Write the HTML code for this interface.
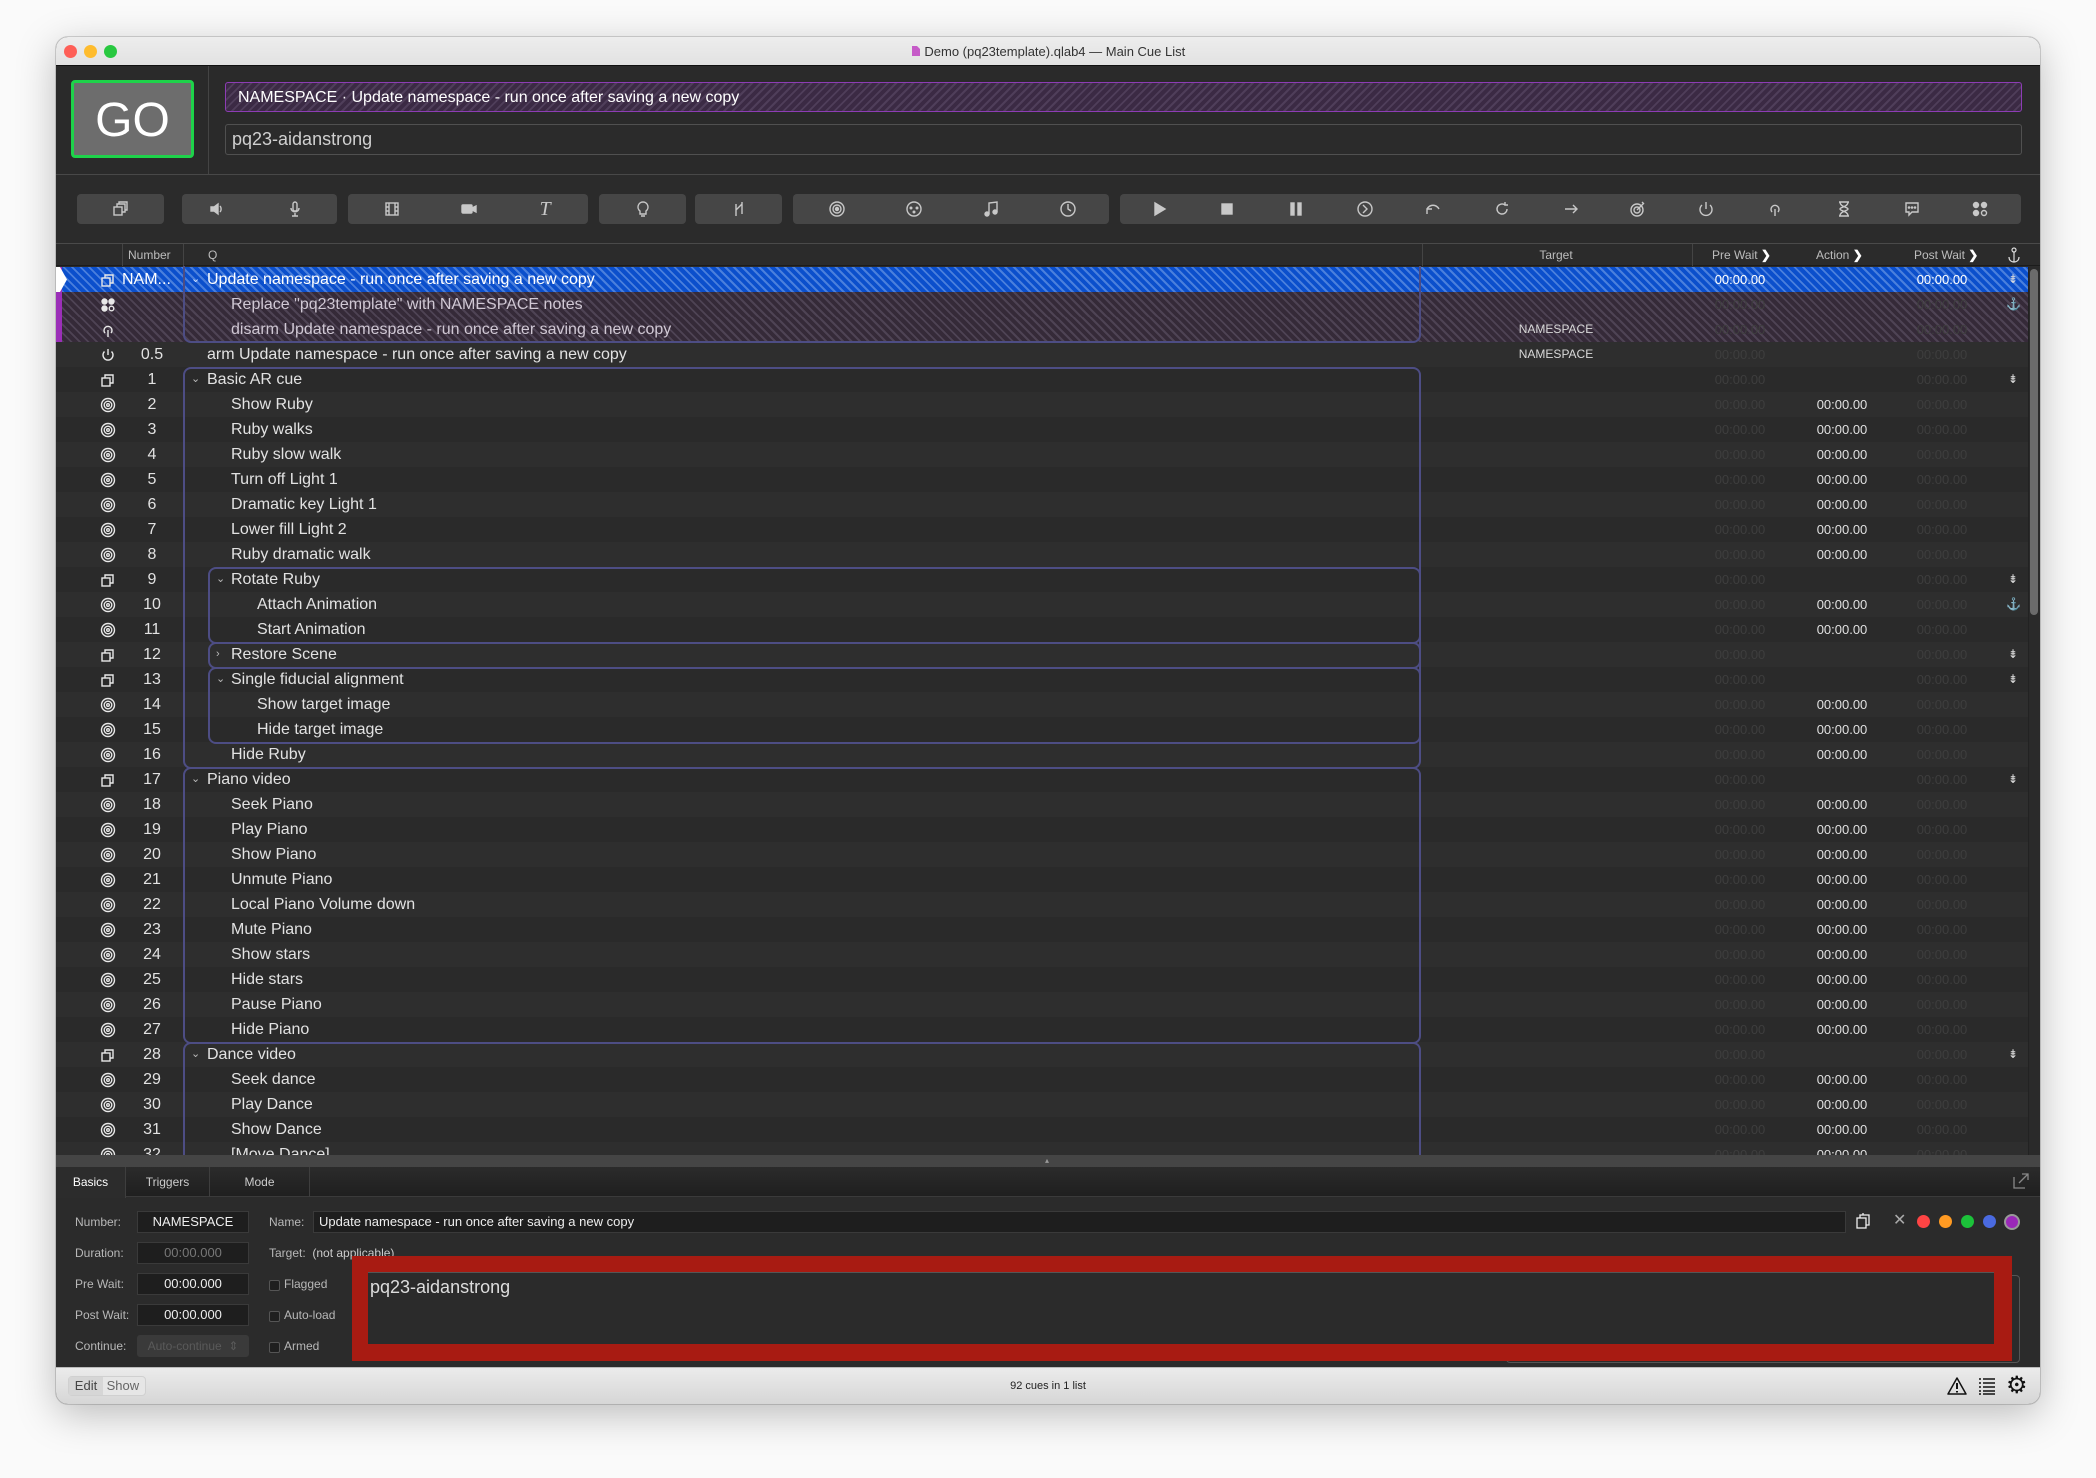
<!DOCTYPE html>
<html><head><meta charset="utf-8">
<style>
*{box-sizing:border-box;margin:0;padding:0}
body{width:2096px;height:1478px;background:#fafafa;font-family:"Liberation Sans",sans-serif;position:relative;overflow:hidden}
.a{position:absolute}
#win{position:absolute;left:56px;top:37px;width:1984px;height:1367px;border-radius:12px;overflow:hidden;background:#2b2b2b;box-shadow:0 10px 40px rgba(0,0,0,.25),0 0 0 1px rgba(0,0,0,.15)}
.tl{position:absolute;top:8px;width:13px;height:13px;border-radius:50%}
.btn{position:absolute;top:157px;height:30px;background:#464646;border-radius:4px}
.ti{position:absolute;top:157px;height:30px;width:30px;margin-left:-15px;display:flex;align-items:center;justify-content:center;color:#c8c8c8}
.ti svg{width:18px;height:18px;stroke:#c8c8c8;fill:none;stroke-width:1.4}
#tbl{position:absolute;left:0;top:230px;width:1984px}
.r{height:25px;position:relative;background:#2a2a2a;color:#e2e2e2;font-size:16px;line-height:25px}
.r:nth-child(even){background:#2e2e2e}
.r span{position:absolute;top:0;white-space:nowrap}
.ic{left:42px;width:20px;height:25px;display:flex;align-items:center;justify-content:center}
.ic svg{width:16px;height:16px;stroke:#e8e8e8;fill:none;stroke-width:1.4}
.n{left:64px;width:64px;text-align:center}
.l0{left:151px}.l1{left:175px}.l2{left:201px}
.c0{left:135px;font-size:11px;color:#bbb}.c1{left:160px;font-size:11px;color:#bbb}
.tg{left:1440px;width:120px;text-align:center;font-size:12px;color:#d8d8d8}
.pw,.ac,.po{width:100px;text-align:center;font-size:13px;color:#3e3e3e}
.pw{left:1634px}.ac{left:1736px;color:#e0e0e0}.po{left:1836px}
.ri{left:1950px;width:14px;font-size:12px;color:#ddd;text-align:center}
.box{position:absolute;border:2px solid #4d4d84;border-radius:8px;pointer-events:none}
.lab{position:absolute;font-size:12px;color:#b8b8b8}
.fld{position:absolute;height:22px;background:#1e1e1e;border:1px solid #3a3a3a;color:#eee;font-size:13px;line-height:20px;text-align:center}
.cb{position:absolute;width:11px;height:11px;border:1px solid #555;border-radius:2px;background:#1f1f1f}
</style></head><body>
<div id="win">
<div class="a" style="left:0;top:0;width:1984px;height:29px;background:linear-gradient(#ededed,#e2e2e2);border-bottom:1px solid #111"></div>
<div class="tl" style="left:8px;background:#fe5f57"></div>
<div class="tl" style="left:28px;background:#febc2e"></div>
<div class="tl" style="left:48px;background:#28c840"></div>
<div class="a" style="left:0;width:1984px;top:7px;text-align:center;font-size:13px;color:#333"><svg width="10" height="12" style="vertical-align:-1px"><path d="M1 1h5l3 3v7H1z" fill="#c65bc8"/></svg> Demo (pq23template).qlab4 — Main Cue List</div>

<div class="a" style="left:0;top:29px;width:1984px;height:108px;background:#2a2a2a"></div>
<div class="a" style="left:15px;top:43px;width:123px;height:78px;background:#6d6d6d;border:3px solid #1ed24a;border-radius:4px;color:#fff;font-size:48px;line-height:76px;text-align:center">GO</div>
<div class="a" style="left:152px;top:29px;width:1px;height:108px;background:#444"></div>
<div class="a" style="left:169px;top:45px;width:1797px;height:30px;border:1px solid #8d3cb5;border-radius:3px;background:repeating-linear-gradient(-45deg,#3b2a44 0 4px,#4f3e5a 4px 6px);color:#fff;font-size:16px;line-height:30px;padding-left:12px">NAMESPACE · Update namespace - run once after saving a new copy</div>
<div class="a" style="left:169px;top:87px;width:1797px;height:31px;border:1px solid #505050;border-radius:3px;background:#2b2b2b;color:#d0d0d0;font-size:18px;line-height:29px;padding-left:6px">pq23-aidanstrong</div>
<div class="a" style="left:0;top:137px;width:1984px;height:1px;background:#484848"></div>

<div class="btn" style="left:21px;width:87px"></div>
<div class="btn" style="left:126px;width:155px"></div>
<div class="btn" style="left:292px;width:240px"></div>
<div class="btn" style="left:543px;width:87px"></div>
<div class="btn" style="left:639px;width:87px"></div>
<div class="btn" style="left:737px;width:316px"></div>
<div class="btn" style="left:1064px;width:901px"></div>
<div class="ti" style="left:64px"><svg viewBox="0 0 18 18"><rect x="3" y="7" width="8" height="8"/><path d="M6 7V4h8v8h-3M8 4V2h8v8h-2"/></svg></div>
<div class="ti" style="left:161px"><svg viewBox="0 0 18 18"><path d="M3 7h3l4-3v10l-4-3H3z" fill="#c8c8c8"/><path d="M12 6c1.5 1.5 1.5 4.5 0 6"/></svg></div>
<div class="ti" style="left:239px"><svg viewBox="0 0 18 18"><rect x="7" y="2" width="4" height="9" rx="2"/><path d="M5 8c0 5 8 5 8 0M9 13v3M6 16h6"/></svg></div>
<div class="ti" style="left:336px"><svg viewBox="0 0 18 18"><rect x="3" y="3" width="12" height="12"/><path d="M6 3v12M12 3v12M3 7h3M3 11h3M12 7h3M12 11h3"/></svg></div>
<div class="ti" style="left:413px"><svg viewBox="0 0 18 18"><rect x="2" y="5" width="10" height="8" rx="1" fill="#c8c8c8"/><path d="M12 8l4-2v6l-4-2z" fill="#c8c8c8"/></svg></div>
<div class="ti" style="left:489px;font-family:'Liberation Serif',serif;font-style:italic;font-size:20px">T</div>
<div class="ti" style="left:587px"><svg viewBox="0 0 18 18"><path d="M9 2a5 5 0 0 0-3 9v3h6v-3a5 5 0 0 0-3-9zM7 16h4"/></svg></div>
<div class="ti" style="left:683px"><svg viewBox="0 0 18 18"><path d="M6 16V4M12 14V2M6 10l6-6"/></svg></div>
<div class="ti" style="left:781px"><svg viewBox="0 0 18 18"><circle cx="9" cy="9" r="7"/><circle cx="9" cy="9" r="4"/><circle cx="9" cy="9" r="1.5" fill="#c8c8c8"/></svg></div>
<div class="ti" style="left:858px"><svg viewBox="0 0 18 18"><circle cx="9" cy="9" r="7"/><circle cx="6" cy="8" r=".8"/><circle cx="12" cy="8" r=".8"/><circle cx="9" cy="12" r=".8"/></svg></div>
<div class="ti" style="left:935px"><svg viewBox="0 0 18 18"><path d="M7 14V3l8-1v10"/><circle cx="5" cy="14" r="2" fill="#c8c8c8"/><circle cx="13" cy="12" r="2" fill="#c8c8c8"/></svg></div>
<div class="ti" style="left:1012px"><svg viewBox="0 0 18 18"><circle cx="9" cy="9" r="7"/><path d="M9 4v5l3 2"/></svg></div>
<div class="ti" style="left:1103px"><svg viewBox="0 0 18 18"><path d="M5 3l10 6-10 6z" fill="#c8c8c8"/></svg></div>
<div class="ti" style="left:1171px"><svg viewBox="0 0 18 18"><rect x="4" y="4" width="10" height="10" fill="#c8c8c8"/></svg></div>
<div class="ti" style="left:1240px"><svg viewBox="0 0 18 18"><rect x="4" y="3" width="3" height="12" fill="#c8c8c8"/><rect x="11" y="3" width="3" height="12" fill="#c8c8c8"/></svg></div>
<div class="ti" style="left:1309px"><svg viewBox="0 0 18 18"><circle cx="9" cy="9" r="7"/><path d="M7 5l4 4-4 4"/></svg></div>
<div class="ti" style="left:1377px"><svg viewBox="0 0 18 18"><path d="M3 14V9h5M3 9c3-5 9-5 12 0"/></svg></div>
<div class="ti" style="left:1446px"><svg viewBox="0 0 18 18"><path d="M14 9a5 5 0 1 1-2-4M12 2v3h3"/></svg></div>
<div class="ti" style="left:1515px"><svg viewBox="0 0 18 18"><path d="M3 9h12M11 5l4 4-4 4"/></svg></div>
<div class="ti" style="left:1582px"><svg viewBox="0 0 18 18"><circle cx="8" cy="10" r="6"/><circle cx="8" cy="10" r="3"/><path d="M8 10l7-7M13 2l2 2"/></svg></div>
<div class="ti" style="left:1650px"><svg viewBox="0 0 18 18"><path d="M9 2v7M5 5a6 6 0 1 0 8 0"/></svg></div>
<div class="ti" style="left:1719px"><svg viewBox="0 0 18 18"><path d="M9 16V9M6 12a4 4 0 1 1 6 0"/></svg></div>
<div class="ti" style="left:1788px"><svg viewBox="0 0 18 18"><path d="M4 2h10M4 16h10M5 2c0 5 8 5 8 7s-8 2-8 7M13 2c0 5-8 5-8 7s8 2 8 7"/></svg></div>
<div class="ti" style="left:1856px"><svg viewBox="0 0 18 18"><path d="M3 3h12v9H9l-3 3v-3H3z"/><circle cx="6" cy="7.5" r=".6"/><circle cx="9" cy="7.5" r=".6"/><circle cx="12" cy="7.5" r=".6"/></svg></div>
<div class="ti" style="left:1924px"><svg viewBox="0 0 18 18"><circle cx="5" cy="5" r="2.5" fill="#c8c8c8"/><circle cx="13" cy="5" r="2.5" fill="#c8c8c8"/><circle cx="5" cy="13" r="2.5" fill="#c8c8c8"/><circle cx="13" cy="13" r="2.5"/></svg></div>

<div class="a" style="left:0;top:206px;width:1984px;height:1px;background:#4a4a4a"></div>
<div class="a" style="left:0;top:207px;width:1984px;height:22px;background:#2b2b2b;border-bottom:1px solid #1c1c1c;font-size:12px;color:#bdbdbd;line-height:22px">
<div class="a" style="left:66px;top:0;width:1px;height:22px;background:#444"></div>
<div class="a" style="left:127px;top:0;width:1px;height:22px;background:#444"></div>
<div class="a" style="left:1366px;top:0;width:1px;height:22px;background:#444"></div>
<div class="a" style="left:1636px;top:0;width:1px;height:22px;background:#444"></div>
<span class="a" style="left:72px">Number</span>
<span class="a" style="left:152px">Q</span>
<span class="a" style="left:1440px;width:120px;text-align:center">Target</span>
<span class="a" style="left:1656px">Pre Wait <b style="color:#fff">❯</b></span>
<span class="a" style="left:1760px">Action <b style="color:#fff">❯</b></span>
<span class="a" style="left:1858px">Post Wait <b style="color:#fff">❯</b></span>
<svg class="a" style="left:1951px;top:3px" width="14" height="16"><circle cx="7" cy="3" r="2" stroke="#ddd" fill="none" stroke-width="1.2"/><path d="M7 5v10M2 10c0 3 2 5 5 5s5-2 5-5" stroke="#ddd" fill="none" stroke-width="1.2"/></svg>
</div>

<div id="tbl">
<div class="r" style="background:repeating-linear-gradient(45deg,#0b4fcc 0 4px,#4a7fdc 4px 6px);color:#fff"><span class="ic"><svg viewBox="0 0 16 16"><rect x="2" y="6" width="8" height="8"/><path d="M5 6V3h8v8h-3"/></svg></span><span class="n" style="text-align:left;left:66px">NAM...</span><span class="c0" style="color:#cfe0ff">⌄</span><span class="l0">Update namespace - run once after saving a new copy</span><span class="pw" style="color:#fff">00:00.00</span><span class="po" style="color:#fff">00:00.00</span><span class="ri">⇟</span></div>
<div class="r" style="background:repeating-linear-gradient(45deg,#352a38 0 4px,#4e4354 4px 6px);color:#d0c8d4"><span class="ic"><svg viewBox="0 0 16 16"><circle cx="4.5" cy="4.5" r="2.5" fill="#e8e8e8"/><circle cx="11.5" cy="4.5" r="2.5" fill="#e8e8e8"/><circle cx="4.5" cy="11.5" r="2.5" fill="#e8e8e8"/><circle cx="11.5" cy="11.5" r="2.3"/></svg></span><span class="l1">Replace "pq23template" with NAMESPACE notes</span><span class="pw">00:00.00</span><span class="po">00:00.00</span><span class="ri">⚓</span></div>
<div class="r" style="background:repeating-linear-gradient(45deg,#352a38 0 4px,#4e4354 4px 6px);color:#d0c8d4"><span class="ic"><svg viewBox="0 0 16 16"><path d="M8 15V8M5 11a4 4 0 1 1 6 0"/></svg></span><span class="l1">disarm Update namespace - run once after saving a new copy</span><span class="tg">NAMESPACE</span><span class="pw">00:00.00</span><span class="po">00:00.00</span></div>
<div class="r"><span class="ic"><svg viewBox="0 0 16 16"><path d="M8 2v6M4.5 4.5a5 5 0 1 0 7 0"/></svg></span><span class="n">0.5</span><span class="l0">arm Update namespace - run once after saving a new copy</span><span class="tg">NAMESPACE</span><span class="pw">00:00.00</span><span class="po">00:00.00</span></div>
<div class="r"><span class="ic"><svg viewBox="0 0 16 16"><rect x="2" y="6" width="8" height="8"/><path d="M5 6V3h8v8h-3"/></svg></span><span class="n">1</span><span class="c0">⌄</span><span class="l0">Basic AR cue</span><span class="pw">00:00.00</span><span class="po">00:00.00</span><span class="ri">⇟</span></div>
<div class="r"><span class="ic"><svg viewBox="0 0 16 16"><circle cx="8" cy="8" r="6.5"/><circle cx="8" cy="8" r="3.8"/><circle cx="8" cy="8" r="1.3"/></svg></span><span class="n">2</span><span class="l1">Show Ruby</span><span class="pw">00:00.00</span><span class="ac">00:00.00</span><span class="po">00:00.00</span></div>
<div class="r"><span class="ic"><svg viewBox="0 0 16 16"><circle cx="8" cy="8" r="6.5"/><circle cx="8" cy="8" r="3.8"/><circle cx="8" cy="8" r="1.3"/></svg></span><span class="n">3</span><span class="l1">Ruby walks</span><span class="pw">00:00.00</span><span class="ac">00:00.00</span><span class="po">00:00.00</span></div>
<div class="r"><span class="ic"><svg viewBox="0 0 16 16"><circle cx="8" cy="8" r="6.5"/><circle cx="8" cy="8" r="3.8"/><circle cx="8" cy="8" r="1.3"/></svg></span><span class="n">4</span><span class="l1">Ruby slow walk</span><span class="pw">00:00.00</span><span class="ac">00:00.00</span><span class="po">00:00.00</span></div>
<div class="r"><span class="ic"><svg viewBox="0 0 16 16"><circle cx="8" cy="8" r="6.5"/><circle cx="8" cy="8" r="3.8"/><circle cx="8" cy="8" r="1.3"/></svg></span><span class="n">5</span><span class="l1">Turn off Light 1</span><span class="pw">00:00.00</span><span class="ac">00:00.00</span><span class="po">00:00.00</span></div>
<div class="r"><span class="ic"><svg viewBox="0 0 16 16"><circle cx="8" cy="8" r="6.5"/><circle cx="8" cy="8" r="3.8"/><circle cx="8" cy="8" r="1.3"/></svg></span><span class="n">6</span><span class="l1">Dramatic key Light 1</span><span class="pw">00:00.00</span><span class="ac">00:00.00</span><span class="po">00:00.00</span></div>
<div class="r"><span class="ic"><svg viewBox="0 0 16 16"><circle cx="8" cy="8" r="6.5"/><circle cx="8" cy="8" r="3.8"/><circle cx="8" cy="8" r="1.3"/></svg></span><span class="n">7</span><span class="l1">Lower fill Light 2</span><span class="pw">00:00.00</span><span class="ac">00:00.00</span><span class="po">00:00.00</span></div>
<div class="r"><span class="ic"><svg viewBox="0 0 16 16"><circle cx="8" cy="8" r="6.5"/><circle cx="8" cy="8" r="3.8"/><circle cx="8" cy="8" r="1.3"/></svg></span><span class="n">8</span><span class="l1">Ruby dramatic walk</span><span class="pw">00:00.00</span><span class="ac">00:00.00</span><span class="po">00:00.00</span></div>
<div class="r"><span class="ic"><svg viewBox="0 0 16 16"><rect x="2" y="6" width="8" height="8"/><path d="M5 6V3h8v8h-3"/></svg></span><span class="n">9</span><span class="c1">⌄</span><span class="l1">Rotate Ruby</span><span class="pw">00:00.00</span><span class="po">00:00.00</span><span class="ri">⇟</span></div>
<div class="r"><span class="ic"><svg viewBox="0 0 16 16"><circle cx="8" cy="8" r="6.5"/><circle cx="8" cy="8" r="3.8"/><circle cx="8" cy="8" r="1.3"/></svg></span><span class="n">10</span><span class="l2">Attach Animation</span><span class="pw">00:00.00</span><span class="ac">00:00.00</span><span class="po">00:00.00</span><span class="ri">⚓</span></div>
<div class="r"><span class="ic"><svg viewBox="0 0 16 16"><circle cx="8" cy="8" r="6.5"/><circle cx="8" cy="8" r="3.8"/><circle cx="8" cy="8" r="1.3"/></svg></span><span class="n">11</span><span class="l2">Start Animation</span><span class="pw">00:00.00</span><span class="ac">00:00.00</span><span class="po">00:00.00</span></div>
<div class="r"><span class="ic"><svg viewBox="0 0 16 16"><rect x="2" y="6" width="8" height="8"/><path d="M5 6V3h8v8h-3"/></svg></span><span class="n">12</span><span class="c1">›</span><span class="l1">Restore Scene</span><span class="pw">00:00.00</span><span class="po">00:00.00</span><span class="ri">⇟</span></div>
<div class="r"><span class="ic"><svg viewBox="0 0 16 16"><rect x="2" y="6" width="8" height="8"/><path d="M5 6V3h8v8h-3"/></svg></span><span class="n">13</span><span class="c1">⌄</span><span class="l1">Single fiducial alignment</span><span class="pw">00:00.00</span><span class="po">00:00.00</span><span class="ri">⇟</span></div>
<div class="r"><span class="ic"><svg viewBox="0 0 16 16"><circle cx="8" cy="8" r="6.5"/><circle cx="8" cy="8" r="3.8"/><circle cx="8" cy="8" r="1.3"/></svg></span><span class="n">14</span><span class="l2">Show target image</span><span class="pw">00:00.00</span><span class="ac">00:00.00</span><span class="po">00:00.00</span></div>
<div class="r"><span class="ic"><svg viewBox="0 0 16 16"><circle cx="8" cy="8" r="6.5"/><circle cx="8" cy="8" r="3.8"/><circle cx="8" cy="8" r="1.3"/></svg></span><span class="n">15</span><span class="l2">Hide target image</span><span class="pw">00:00.00</span><span class="ac">00:00.00</span><span class="po">00:00.00</span></div>
<div class="r"><span class="ic"><svg viewBox="0 0 16 16"><circle cx="8" cy="8" r="6.5"/><circle cx="8" cy="8" r="3.8"/><circle cx="8" cy="8" r="1.3"/></svg></span><span class="n">16</span><span class="l1">Hide Ruby</span><span class="pw">00:00.00</span><span class="ac">00:00.00</span><span class="po">00:00.00</span></div>
<div class="r"><span class="ic"><svg viewBox="0 0 16 16"><rect x="2" y="6" width="8" height="8"/><path d="M5 6V3h8v8h-3"/></svg></span><span class="n">17</span><span class="c0">⌄</span><span class="l0">Piano video</span><span class="pw">00:00.00</span><span class="po">00:00.00</span><span class="ri">⇟</span></div>
<div class="r"><span class="ic"><svg viewBox="0 0 16 16"><circle cx="8" cy="8" r="6.5"/><circle cx="8" cy="8" r="3.8"/><circle cx="8" cy="8" r="1.3"/></svg></span><span class="n">18</span><span class="l1">Seek Piano</span><span class="pw">00:00.00</span><span class="ac">00:00.00</span><span class="po">00:00.00</span></div>
<div class="r"><span class="ic"><svg viewBox="0 0 16 16"><circle cx="8" cy="8" r="6.5"/><circle cx="8" cy="8" r="3.8"/><circle cx="8" cy="8" r="1.3"/></svg></span><span class="n">19</span><span class="l1">Play Piano</span><span class="pw">00:00.00</span><span class="ac">00:00.00</span><span class="po">00:00.00</span></div>
<div class="r"><span class="ic"><svg viewBox="0 0 16 16"><circle cx="8" cy="8" r="6.5"/><circle cx="8" cy="8" r="3.8"/><circle cx="8" cy="8" r="1.3"/></svg></span><span class="n">20</span><span class="l1">Show Piano</span><span class="pw">00:00.00</span><span class="ac">00:00.00</span><span class="po">00:00.00</span></div>
<div class="r"><span class="ic"><svg viewBox="0 0 16 16"><circle cx="8" cy="8" r="6.5"/><circle cx="8" cy="8" r="3.8"/><circle cx="8" cy="8" r="1.3"/></svg></span><span class="n">21</span><span class="l1">Unmute Piano</span><span class="pw">00:00.00</span><span class="ac">00:00.00</span><span class="po">00:00.00</span></div>
<div class="r"><span class="ic"><svg viewBox="0 0 16 16"><circle cx="8" cy="8" r="6.5"/><circle cx="8" cy="8" r="3.8"/><circle cx="8" cy="8" r="1.3"/></svg></span><span class="n">22</span><span class="l1">Local Piano Volume down</span><span class="pw">00:00.00</span><span class="ac">00:00.00</span><span class="po">00:00.00</span></div>
<div class="r"><span class="ic"><svg viewBox="0 0 16 16"><circle cx="8" cy="8" r="6.5"/><circle cx="8" cy="8" r="3.8"/><circle cx="8" cy="8" r="1.3"/></svg></span><span class="n">23</span><span class="l1">Mute Piano</span><span class="pw">00:00.00</span><span class="ac">00:00.00</span><span class="po">00:00.00</span></div>
<div class="r"><span class="ic"><svg viewBox="0 0 16 16"><circle cx="8" cy="8" r="6.5"/><circle cx="8" cy="8" r="3.8"/><circle cx="8" cy="8" r="1.3"/></svg></span><span class="n">24</span><span class="l1">Show stars</span><span class="pw">00:00.00</span><span class="ac">00:00.00</span><span class="po">00:00.00</span></div>
<div class="r"><span class="ic"><svg viewBox="0 0 16 16"><circle cx="8" cy="8" r="6.5"/><circle cx="8" cy="8" r="3.8"/><circle cx="8" cy="8" r="1.3"/></svg></span><span class="n">25</span><span class="l1">Hide stars</span><span class="pw">00:00.00</span><span class="ac">00:00.00</span><span class="po">00:00.00</span></div>
<div class="r"><span class="ic"><svg viewBox="0 0 16 16"><circle cx="8" cy="8" r="6.5"/><circle cx="8" cy="8" r="3.8"/><circle cx="8" cy="8" r="1.3"/></svg></span><span class="n">26</span><span class="l1">Pause Piano</span><span class="pw">00:00.00</span><span class="ac">00:00.00</span><span class="po">00:00.00</span></div>
<div class="r"><span class="ic"><svg viewBox="0 0 16 16"><circle cx="8" cy="8" r="6.5"/><circle cx="8" cy="8" r="3.8"/><circle cx="8" cy="8" r="1.3"/></svg></span><span class="n">27</span><span class="l1">Hide Piano</span><span class="pw">00:00.00</span><span class="ac">00:00.00</span><span class="po">00:00.00</span></div>
<div class="r"><span class="ic"><svg viewBox="0 0 16 16"><rect x="2" y="6" width="8" height="8"/><path d="M5 6V3h8v8h-3"/></svg></span><span class="n">28</span><span class="c0">⌄</span><span class="l0">Dance video</span><span class="pw">00:00.00</span><span class="po">00:00.00</span><span class="ri">⇟</span></div>
<div class="r"><span class="ic"><svg viewBox="0 0 16 16"><circle cx="8" cy="8" r="6.5"/><circle cx="8" cy="8" r="3.8"/><circle cx="8" cy="8" r="1.3"/></svg></span><span class="n">29</span><span class="l1">Seek dance</span><span class="pw">00:00.00</span><span class="ac">00:00.00</span><span class="po">00:00.00</span></div>
<div class="r"><span class="ic"><svg viewBox="0 0 16 16"><circle cx="8" cy="8" r="6.5"/><circle cx="8" cy="8" r="3.8"/><circle cx="8" cy="8" r="1.3"/></svg></span><span class="n">30</span><span class="l1">Play Dance</span><span class="pw">00:00.00</span><span class="ac">00:00.00</span><span class="po">00:00.00</span></div>
<div class="r"><span class="ic"><svg viewBox="0 0 16 16"><circle cx="8" cy="8" r="6.5"/><circle cx="8" cy="8" r="3.8"/><circle cx="8" cy="8" r="1.3"/></svg></span><span class="n">31</span><span class="l1">Show Dance</span><span class="pw">00:00.00</span><span class="ac">00:00.00</span><span class="po">00:00.00</span></div>
<div class="r"><span class="ic"><svg viewBox="0 0 16 16"><circle cx="8" cy="8" r="6.5"/><circle cx="8" cy="8" r="3.8"/><circle cx="8" cy="8" r="1.3"/></svg></span><span class="n">32</span><span class="l1">[Move Dance]</span><span class="pw">00:00.00</span><span class="ac">00:00.00</span><span class="po">00:00.00</span></div>
</div>
<div class="a" style="left:0;top:230px;width:6px;height:75px;background:#9b2fb8"></div>
<svg class="a" style="left:0;top:230px" width="12" height="25"><path d="M0 0h4l7 12.5-7 12.5H0z" fill="#fff"/></svg>
<div class="box" style="left:127px;top:229px;width:1238px;height:77px;border-top:none;border-radius:0 0 8px 8px"></div>
<div class="box" style="left:127px;top:330px;width:1238px;height:402px"></div>
<div class="box" style="left:152px;top:530px;width:1213px;height:77px"></div>
<div class="box" style="left:152px;top:605px;width:1213px;height:27px"></div>
<div class="box" style="left:152px;top:630px;width:1213px;height:77px"></div>
<div class="box" style="left:127px;top:730px;width:1238px;height:277px"></div>
<div class="box" style="left:127px;top:1005px;width:1238px;height:140px"></div>
<div class="a" style="left:1972px;top:230px;width:12px;height:888px;background:#2a2a2a;border-left:1px solid #222"></div>
<div class="a" style="left:1974px;top:232px;width:8px;height:346px;background:#6b6b6b;border-radius:4px"></div>

<div class="a" style="left:0;top:1118px;width:1984px;height:12px;background:#454545"></div>
<div class="a" style="left:989px;top:1119px;font-size:8px;color:#999">▴</div>
<div class="a" style="left:0;top:1130px;width:1984px;height:30px;background:linear-gradient(#2b2b2b,#1f1f1f);border-bottom:1px solid #3a3a3a"></div>
<div class="a" style="left:0;top:1130px;width:70px;height:31px;background:#2c2c2c;border-right:1px solid #3e3e3e;color:#fff;font-size:12px;line-height:30px;text-align:center">Basics</div>
<div class="a" style="left:70px;top:1130px;width:84px;height:30px;border-right:1px solid #3e3e3e;color:#ccc;font-size:12px;line-height:30px;text-align:center">Triggers</div>
<div class="a" style="left:154px;top:1130px;width:100px;height:30px;border-right:1px solid #3e3e3e;color:#ccc;font-size:12px;line-height:30px;text-align:center">Mode</div>
<svg class="a" style="left:1957px;top:1136px" width="16" height="16"><path d="M1 4v11h11M6 10l9-9M9 1h6v6" stroke="#888" fill="none" stroke-width="1.3"/></svg>

<div class="lab" style="left:19px;top:1178px">Number:</div>
<div class="fld" style="left:81px;top:1174px;width:112px">NAMESPACE</div>
<div class="lab" style="left:213px;top:1178px">Name:</div>
<div class="fld" style="left:257px;top:1174px;width:1533px;text-align:left;padding-left:5px">Update namespace - run once after saving a new copy</div>
<svg class="a" style="left:1799px;top:1175px" width="18" height="18"><rect x="2" y="6" width="9" height="10" stroke="#eee" fill="none" stroke-width="1.3"/><path d="M5 6V3h9v10h-3M8 3V1" stroke="#eee" fill="none" stroke-width="1.3"/></svg>
<div class="a" style="left:1837px;top:1173px;font-size:16px;color:#aaa">✕</div>
<div class="a" style="left:1861px;top:1178px;width:13px;height:13px;border-radius:50%;background:#fe4444"></div>
<div class="a" style="left:1883px;top:1178px;width:13px;height:13px;border-radius:50%;background:#ff9a22"></div>
<div class="a" style="left:1905px;top:1178px;width:13px;height:13px;border-radius:50%;background:#1cc23a"></div>
<div class="a" style="left:1927px;top:1178px;width:13px;height:13px;border-radius:50%;background:#4a6ae0"></div>
<div class="a" style="left:1948px;top:1177px;width:16px;height:16px;border-radius:50%;background:#9a28b8;border:2px solid #999"></div>

<div class="lab" style="left:19px;top:1209px">Duration:</div>
<div class="fld" style="left:81px;top:1205px;width:112px;color:#777">00:00.000</div>
<div class="lab" style="left:213px;top:1209px">Target:&nbsp; <span style="color:#ccc">(not applicable)</span></div>
<div class="lab" style="left:19px;top:1240px">Pre Wait:</div>
<div class="fld" style="left:81px;top:1236px;width:112px">00:00.000</div>
<div class="lab" style="left:19px;top:1271px">Post Wait:</div>
<div class="fld" style="left:81px;top:1267px;width:112px">00:00.000</div>
<div class="lab" style="left:19px;top:1302px">Continue:</div>
<div class="fld" style="left:81px;top:1298px;width:112px;background:#3a3a3a;color:#5a5a5a;border-radius:3px;font-size:12px">Auto-continue &nbsp;⇕</div>
<div class="cb" style="left:213px;top:1243px"></div><div class="lab" style="left:228px;top:1240px">Flagged</div>
<div class="cb" style="left:213px;top:1274px"></div><div class="lab" style="left:228px;top:1271px">Auto-load</div>
<div class="cb" style="left:213px;top:1305px"></div><div class="lab" style="left:228px;top:1302px">Armed</div>
<div class="a" style="left:1450px;top:1238px;width:514px;height:88px;border:1px solid #555;border-radius:4px"></div>
<div class="a" style="left:296px;top:1219px;width:1660px;height:105px;background:#a81b12"></div>
<div class="a" style="left:312px;top:1235px;width:1626px;height:72px;background:#2b2b2b;border-top:1px solid #555;color:#ddd;font-size:18px;padding:4px 0 0 2px">pq23-aidanstrong</div>

<div class="a" style="left:0;top:1330px;width:1984px;height:37px;background:linear-gradient(#ebebeb,#d6d6d6);border-top:1px solid #bbb"></div>
<div class="a" style="left:12px;top:1339px;width:78px;height:20px;border-radius:4px;background:#e6e6e6;border:1px solid #d0d0d0;font-size:13px;line-height:18px;color:#444"><span style="display:inline-block;width:34px;text-align:center;background:#d6d6d6">Edit</span> <span style="color:#666">Show</span></div>
<div class="a" style="left:0;width:1984px;top:1343px;text-align:center;font-size:11px;color:#222">92 cues in 1 list</div>
<svg class="a" style="left:1891px;top:1339px" width="20" height="20"><path d="M10 2L1 18h18z" stroke="#111" fill="none" stroke-width="1.5" stroke-linejoin="round"/><path d="M10 7v6M10 15v1.5" stroke="#111" stroke-width="2"/></svg>
<svg class="a" style="left:1922px;top:1339px" width="18" height="20"><path d="M1 3h2M5 3h12M1 7h2M5 7h12M1 11h2M5 11h12M1 15h2M5 15h12M1 18h2M5 18h12" stroke="#111" stroke-width="1.4"/></svg>
<div class="a" style="left:1950px;top:1334px;font-size:24px;color:#111">⚙</div>
</div>
</body></html>
